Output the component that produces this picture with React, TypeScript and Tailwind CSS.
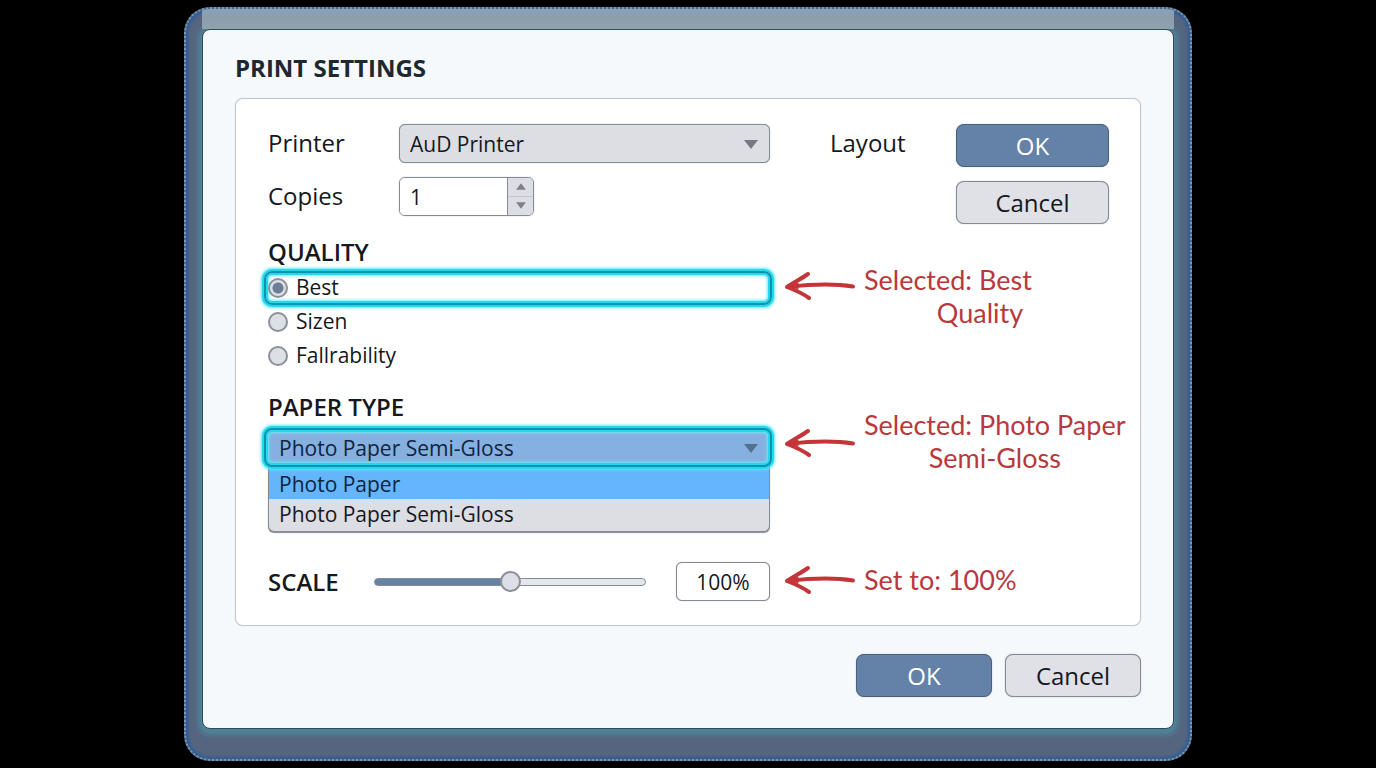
import { useState, type CSSProperties, type ReactNode } from "react";
import clsx from "clsx";

const qualityOptions = [
  { value: "best", label: "Best" },
  { value: "sizen", label: "Sizen" },
  { value: "fallrability", label: "Fallrability" },
];

const paperOptions = ["Photo Paper", "Photo Paper Semi-Gloss"];

const highlight =
  "border-2 border-[#0b93ad] rounded-lg shadow-[0_0_0_2px_#22d8ee,0_0_3px_3px_#5be8f6,inset_0_0_0_2px_#22d8ee,inset_0_0_3px_3px_#6eeaf6]";

function Caret({ className }: { className?: string }) {
  return (
    <svg viewBox="0 0 14 9" className={clsx("pointer-events-none", className)} aria-hidden="true">
      <path d="M0 0h14L7 9z" fill="currentColor" />
    </svg>
  );
}

function Arrow({ className }: { className?: string }) {
  return (
    <svg
      viewBox="0 0 72 30"
      className={clsx("w-[72px] h-[30px] shrink-0 text-[#c43538]", className)}
      fill="none"
      stroke="currentColor"
      strokeLinecap="round"
      strokeLinejoin="round"
      aria-hidden="true"
    >
      <path d="M69 15.5C50 12.5 29 13 4 16" strokeWidth="4" />
      <path d="M24 3C17 8 10 11 3 16c8 3 15 6 22 11" strokeWidth="4" />
      <path d="M5 16l9-4v6z" fill="currentColor" strokeWidth="1" />
    </svg>
  );
}

function Note({ className, arrowClassName, children }: { className?: string; arrowClassName?: string; children: ReactNode }) {
  return (
    <div className={clsx("flex gap-2 pl-3.5", className)}>
      <Arrow className={arrowClassName} />
      <p className="font-['Lato',sans-serif] text-[27px] leading-[33px] text-[#b8393c] whitespace-nowrap text-center">
        {children}
      </p>
    </div>
  );
}

function Button({ primary, className, children }: { primary?: boolean; className?: string; children: ReactNode }) {
  return (
    <button
      type="button"
      className={clsx(
        "h-[43px] rounded-lg border text-2xl shadow-[0_0_1px_#7d838d]",
        primary ? "bg-[#6482a7] border-[#4a617d] text-white" : "bg-[#dfe1e7] border-[#858a93] text-[#15181d]",
        className
      )}
    >
      {children}
    </button>
  );
}

export default function App() {
  const [copies, setCopies] = useState(1);
  const [quality, setQuality] = useState("best");
  const [paper, setPaper] = useState("Photo Paper Semi-Gloss");
  const [scale, setScale] = useState(50);

  return (
    <main className="min-h-screen bg-black py-[7px] flex justify-center items-start font-['Open_Sans',sans-serif] text-[#15181d]">
      {/* Window frame */}
      <div className="w-full max-w-[1008px] rounded-[26px] overflow-hidden border-2 border-dotted border-[#6f9cba] bg-[#55657f] shadow-[inset_0_0_3px_2px_#2b5c9c] px-4 pb-[30px]">
        <div className="relative h-5 bg-linear-to-b from-[#86a3b8] via-[#8f9cab] to-[#8ea3b0]" />

        <form className="rounded-lg border border-[#2f4a58] bg-[#f5f9fb] px-8 pt-[22px] pb-[31px] shadow-[0_2px_5px_4px_#4e8499]">
          <h1 className="text-2xl leading-8 mb-3.5 font-bold text-[#20282f]">PRINT SETTINGS</h1>

          <div className="rounded-lg border border-[#c3c6cc] bg-white pt-[25px] pb-6 pl-8 pr-4 shadow-[0_0_1px_#c3c6cc]">
            <div className="grid grid-cols-[502px_1fr]">
              <div className="grid grid-cols-[131px_1fr] gap-y-3.5 content-start text-2xl leading-[38px]">
                <label htmlFor="printer">Printer</label>
                <div className="relative">
                  <select
                    id="printer"
                    className="block appearance-none w-full h-[39px] rounded-md border border-[#858a93] shadow-[0_0_1px_#858a93] bg-[#dcdee4] pl-2.5 text-[21px] leading-8"
                  >
                    <option>AuD Printer</option>
                  </select>
                  <Caret className="absolute right-3 top-4 w-3.5 h-[9px] text-[#747a84]" />
                </div>

                <label htmlFor="copies">Copies</label>
                <div className="flex w-[135px] h-[39px] rounded-md border border-[#858a93] shadow-[0_0_1px_#858a93] overflow-hidden">
                  <input
                    id="copies"
                    inputMode="numeric"
                    value={copies}
                    onChange={(e) => setCopies(Number(e.target.value) || 1)}
                    className="min-w-0 flex-1 bg-white pl-2.5 text-[21px]"
                  />
                  <div className="w-[26px] grid grid-rows-2 border-l border-[#858a93] bg-[#dcdee4] text-[#7c828b]">
                    <button
                      type="button"
                      aria-label="More copies"
                      onClick={() => setCopies(copies + 1)}
                      className="grid place-items-center border-b border-[#c3c6cc]"
                    >
                      <Caret className="w-2.5 h-[7px] rotate-180" />
                    </button>
                    <button
                      type="button"
                      aria-label="Fewer copies"
                      onClick={() => setCopies(Math.max(1, copies - 1))}
                      className="grid place-items-center"
                    >
                      <Caret className="w-2.5 h-[7px]" />
                    </button>
                  </div>
                </div>
              </div>

              <div className="flex justify-between items-start pl-[60px] pr-[15px]">
                <span className="text-2xl leading-[38px]">Layout</span>
                <div className="flex flex-col gap-3.5 w-[153px]">
                  <Button primary>OK</Button>
                  <Button>Cancel</Button>
                </div>
              </div>
            </div>

            {/* Quality */}
            <div className="grid grid-cols-[502px_1fr] mt-3">
              <fieldset>
                <legend className="text-2xl leading-8 mb-[3px] font-semibold">QUALITY</legend>
                {qualityOptions.map((option) => (
                  <label
                    key={option.value}
                    className={clsx(
                      "flex items-center gap-2 h-[34px] -ml-1 -mr-0.5 pl-0.5 text-[21px]",
                      quality === option.value ? highlight : "border-2 border-transparent"
                    )}
                  >
                    <input
                      type="radio"
                      name="quality"
                      value={option.value}
                      checked={quality === option.value}
                      onChange={() => setQuality(option.value)}
                      className="appearance-none size-5 rounded-full border-2 border-[#8b9099] bg-[#dcdfe4] checked:bg-[radial-gradient(circle,#6d7c98_5px,#dcdfe4_6px)]"
                    />
                    {option.label}
                  </label>
                ))}
              </fieldset>
              <Note className="pt-[27px]" arrowClassName="mt-2">
                Selected: Best
                <span className="block pl-16">Quality</span>
              </Note>
            </div>

            {/* Paper type */}
            <div className="grid grid-cols-[502px_1fr] mt-[18px]">
              <div>
                <label htmlFor="paper" className="block text-2xl leading-8 mb-[5px] font-semibold">
                  PAPER TYPE
                </label>
                <div className="relative -ml-1 -mr-0.5">
                  <select
                    id="paper"
                    value={paper}
                    onChange={(e) => setPaper(e.target.value)}
                    className={clsx(
                      "block appearance-none w-full h-[39px] pl-[13px] text-[21px] leading-8 bg-[#86b0df] text-[#0f2440]",
                      highlight
                    )}
                  >
                    {paperOptions.map((name) => (
                      <option key={name}>{name}</option>
                    ))}
                  </select>
                  <Caret className="absolute right-3.5 top-4 w-3.5 h-[9px] text-[#52708f]" />
                </div>
                <ul
                  role="listbox"
                  aria-label="Paper type"
                  className="rounded-b-md border border-t-0 border-[#858a93] shadow-[0_1px_1px_#858a93] bg-[#dcdee3] overflow-hidden text-[21px] leading-[30px]"
                >
                  {paperOptions.map((name, i) => (
                    <li
                      key={name}
                      role="option"
                      aria-selected={name === paper}
                      onClick={() => setPaper(name)}
                      className={clsx("pl-2.5", i === 0 ? "pt-0.5 bg-[#64b5fb] text-[#0f2440]" : "pb-0.5")}
                    >
                      {name}
                    </li>
                  ))}
                </ul>
              </div>
              <Note className="pt-[17px]" arrowClassName="mt-5">
                Selected: Photo Paper
                <br />
                Semi-Gloss
              </Note>
            </div>

            {/* Scale */}
            <div className="grid grid-cols-[502px_1fr] mt-[30px] items-center">
              <div className="flex items-center">
                <label htmlFor="scale" className="w-[106px] text-2xl leading-8 font-semibold">
                  SCALE
                </label>
                <input
                  id="scale"
                  type="range"
                  min={0}
                  max={100}
                  value={scale}
                  onChange={(e) => setScale(Number(e.target.value))}
                  style={{ "--fill": `${scale}%` } as CSSProperties}
                  className="appearance-none flex-1 min-w-0 h-6 bg-transparent [&::-webkit-slider-runnable-track]:h-2 [&::-webkit-slider-runnable-track]:rounded-full [&::-webkit-slider-runnable-track]:border [&::-webkit-slider-runnable-track]:border-[#858b95] [&::-webkit-slider-runnable-track]:bg-[linear-gradient(to_right,#6683a3_var(--fill),#e4e8ee_var(--fill))] [&::-webkit-slider-thumb]:appearance-none [&::-webkit-slider-thumb]:size-[21px] [&::-webkit-slider-thumb]:-mt-2 [&::-webkit-slider-thumb]:rounded-full [&::-webkit-slider-thumb]:border-2 [&::-webkit-slider-thumb]:border-[#8b9099] [&::-webkit-slider-thumb]:bg-[#dcdfe6]"
                />
                <input
                  aria-label="Scale percent"
                  readOnly
                  value={`${scale * 2}%`}
                  className="ml-[30px] w-[94px] h-[39px] rounded-md border border-[#858a93] shadow-[0_0_1px_#858a93] bg-white text-center text-[21px]"
                />
              </div>
              <Note className="items-center pb-1">Set to: 100%</Note>
            </div>
          </div>

          <div className="flex justify-end gap-[13px] mt-7">
            <Button primary className="w-[136px]">OK</Button>
            <Button className="w-[136px]">Cancel</Button>
          </div>
        </form>
      </div>
    </main>
  );
}
